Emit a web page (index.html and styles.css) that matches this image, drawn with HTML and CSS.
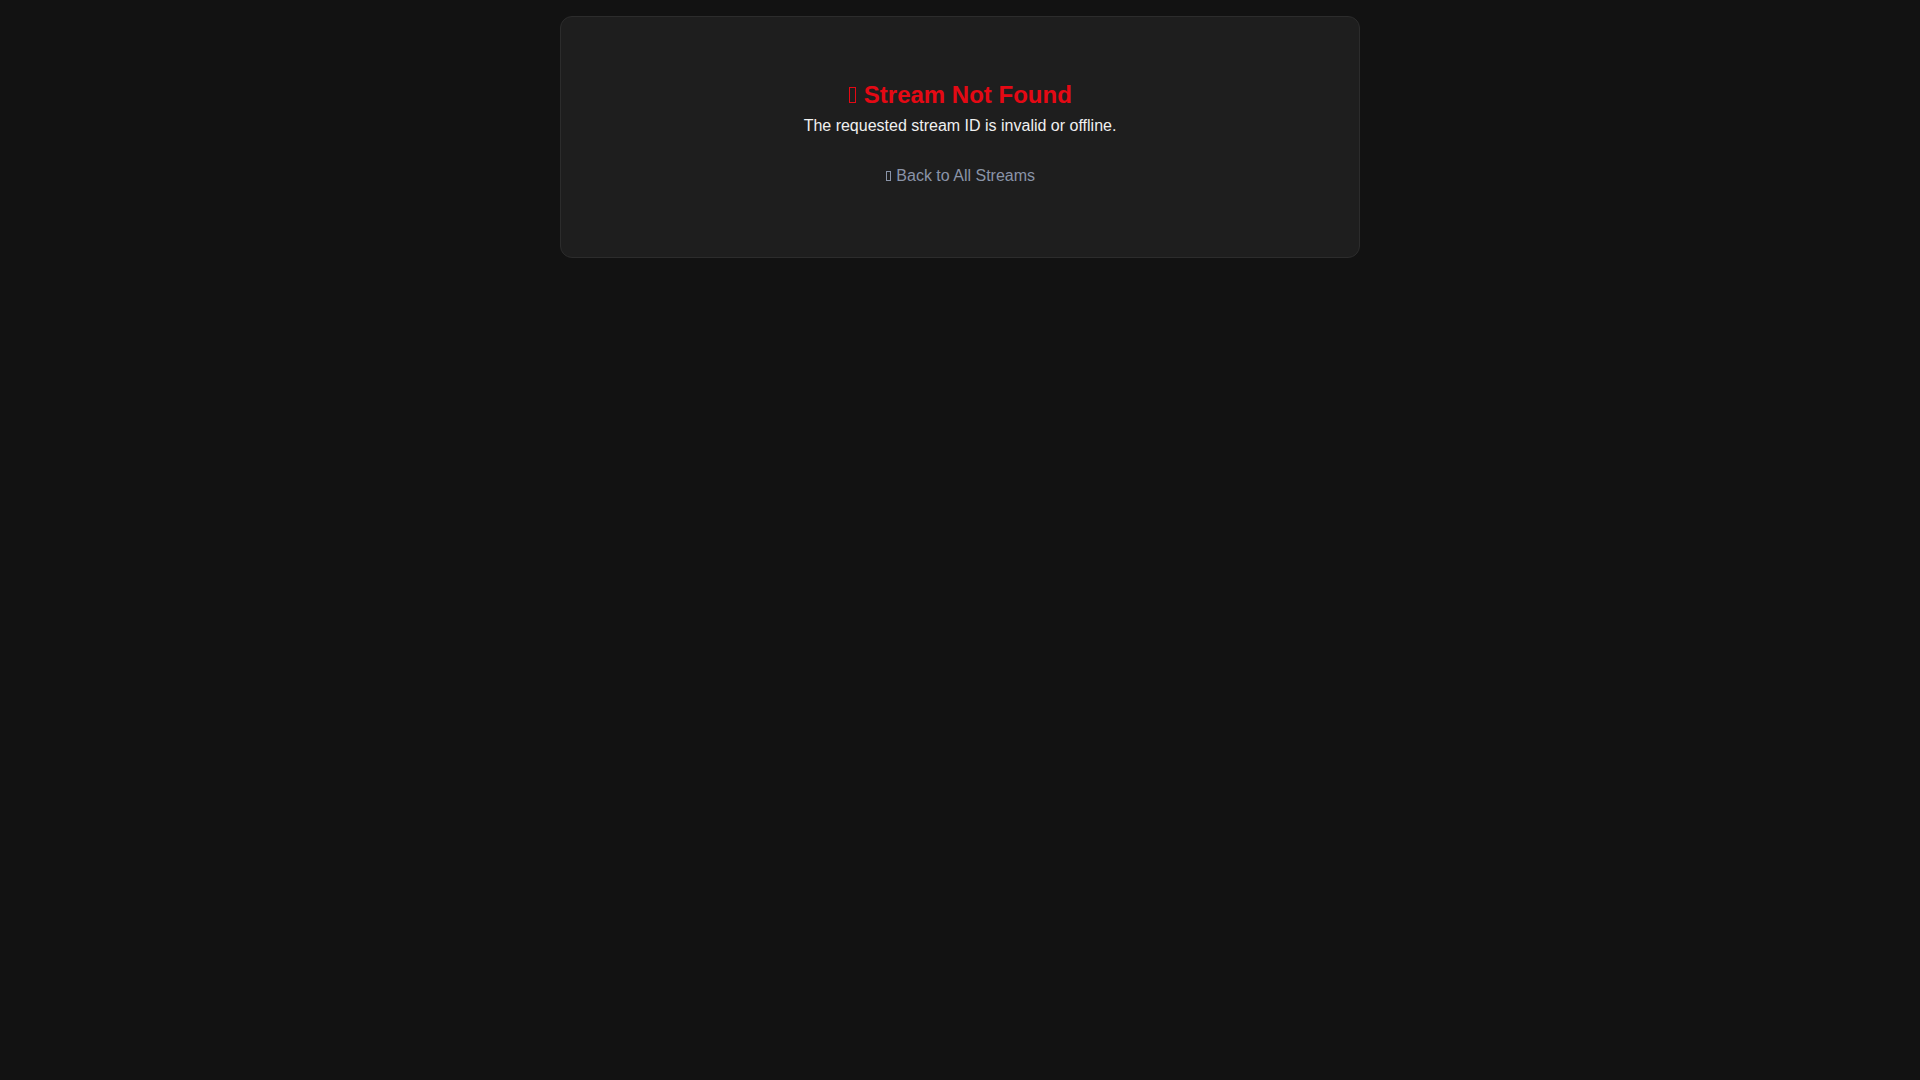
FILE: index.html
```html
<!DOCTYPE html>
<html lang="en">
<head>
<meta charset="utf-8">
<title>Stream Not Found</title>
<link rel="stylesheet" href="styles.css">
</head>
<body>
<main class="container">
  <section class="card">
    <h2 class="title"><span class="icon icon-title" aria-hidden="true"></span> Stream Not Found</h2>
    <p class="message">The requested stream ID is invalid or offline.</p>
    <a class="back" href="#"><span class="icon icon-link" aria-hidden="true"></span> Back to All Streams</a>
  </section>
</main>
</body>
</html>
```
FILE: styles.css
```css
html, body {
  margin: 0;
  padding: 0;
  background: #121212;
  color: #e8e8e8;
  font-family: "Liberation Sans", Arial, sans-serif;
}
.container {
  max-width: 800px;
  margin: 0 auto;
  padding-top: 16px;
}
.card {
  background: #1e1e1e;
  border: 1px solid #2c2c2c;
  border-radius: 12px;
  padding: 40px;
  text-align: center;
  display: flex;
  flex-direction: column;
  align-items: center;
}
.title {
  color: #e50914;
  font-size: 24px;
  font-weight: bold;
  margin: 24px 0 8px;
  line-height: 28px;
}
.message {
  margin: 0;
  font-size: 16px;
  line-height: 18px;
  color: #f0f0f0;
}
.back {
  display: block;
  margin: 32px 0 32px;
  color: #8a94a8;
  font-size: 16px;
  line-height: 18px;
  text-decoration: none;
}
.icon {
  display: inline-block;
  box-sizing: border-box;
  border: 1px solid currentColor;
  vertical-align: baseline;
}
.icon-title {
  width: 7px;
  height: 16px;
  margin: 0 1px 0 1px;
}
.icon-link {
  width: 5px;
  height: 10px;
  margin: 0 1px 0 1px;
}
```
